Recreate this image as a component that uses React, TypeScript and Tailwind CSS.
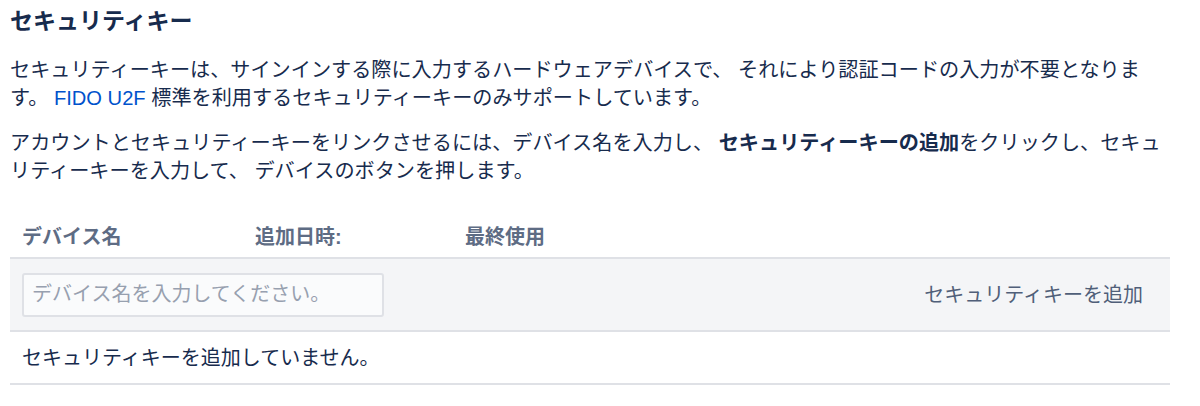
import React from "react";

export default function App() {
  return (
    <div
      className="bg-white w-[1200px] h-[406px] overflow-hidden pl-[10px] pr-[30px] pt-[5px] text-[#172b4d] [text-spacing-trim:space-all]"
      style={{ fontFamily: '"Liberation Sans", "Noto Sans CJK JP", sans-serif' }}
    >
      <h2 className="text-[23px] leading-[32px] font-bold text-[#172b4d]">セキュリティキー</h2>
      <p className="mt-[19px] text-[20.15px] leading-[28px]">
        セキュリティーキーは、サインインする際に入力するハードウェアデバイスで、 それにより認証コードの入力が不要となります。{" "}
        <a className="text-[#0052cc]">FIDO U2F</a> 標準を利用するセキュリティーキーのみサポートしています。
      </p>
      <p className="mt-[17px] text-[20.15px] leading-[28px]">
        アカウントとセキュリティーキーをリンクさせるには、デバイス名を入力し、{" "}
        <b className="font-bold">セキュリティーキーの追加</b>をクリックし、セキュリティーキーを入力して、 デバイスのボタンを押します。
      </p>

      <div className="mt-[32px] w-[1160px]">
        <div className="flex text-[20px] leading-[28px] font-bold text-[#5e6c84] pt-[6px] pb-[6px] border-b-2 border-[#dfe1e6]">
          <div className="w-[233px] pl-[12px]">デバイス名</div>
          <div className="w-[210px] pl-[12px]">追加日時:</div>
          <div className="flex-1 pl-[12px]">最終使用</div>
        </div>
        <div className="flex items-center justify-between bg-[#f4f5f7] h-[73px] border-b-2 border-[#dfe1e6] pl-[12px] pr-[12px]">
          <input
            className="w-[362px] h-[44px] rounded-[3px] border-2 border-[#dfe1e6] bg-[#fafbfc] px-[8px] text-[20px] text-[#172b4d] placeholder:text-[#97a0af] outline-none"
            placeholder="デバイス名を入力してください。"
          />
          <button className="px-[15px] h-[40px] text-[20px] text-[#505f79] bg-transparent">
            セキュリティキーを追加
          </button>
        </div>
        <div className="flex items-center h-[53px] border-b-2 border-[#dfe1e6] pl-[12px] text-[20px] leading-[28px] text-[#172b4d]">
          セキュリティキーを追加していません。
        </div>
      </div>
    </div>
  );
}
